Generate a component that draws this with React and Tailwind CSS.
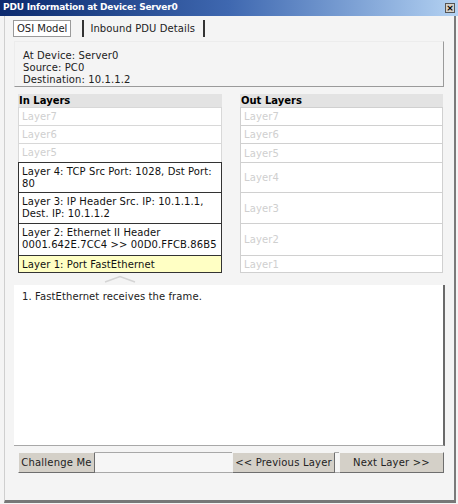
import React from "react";

const inRows = [
  { text: "Layer7", h: "h-[19px]", on: false },
  { text: "Layer6", h: "h-[19px]", on: false },
  { text: "Layer5", h: "h-[20px]", on: false },
  { text: "Layer 4: TCP Src Port: 1028, Dst Port: 80", h: "h-[31px]", on: true },
  { text: "Layer 3: IP Header Src. IP: 10.1.1.1, Dest. IP: 10.1.1.2", h: "h-[32px]", on: true },
  { text: "Layer 2: Ethernet II Header 0001.642E.7CC4 >> 00D0.FFCB.86B5", h: "h-[33px]", on: true },
  { text: "Layer 1: Port FastEthernet", h: "h-[18px]", on: true, current: true },
];

const outRows = ["Layer7", "Layer6", "Layer5", "Layer4", "Layer3", "Layer2", "Layer1"];

function LayerColumn({ title, children }) {
  return (
    <div className="flex flex-col">
      <div className="h-[14px] bg-[#e3e3e3] pl-[1px] text-[10px] font-bold leading-[14px] text-black">
        {title}
      </div>
      {children}
    </div>
  );
}

function Button({ children, className = "" }) {
  return (
    <button
      className={`h-[21px] bg-[#d4d0c8] border border-t-[#f4f4f4] border-l-[#f4f4f4] border-b-[#6e6e6e] border-r-[#6e6e6e] text-[10px] tracking-[0.2px] text-[#222] leading-none ${className}`}
    >
      {children}
    </button>
  );
}

export default function App() {
  return (
    <div className="w-[458px] h-[504px] bg-[#f4f4f4] flex flex-col font-['DejaVu_Sans',sans-serif] overflow-hidden">
      {/* title bar */}
      <div className="h-[16px] flex items-center justify-between bg-gradient-to-r from-[#0c2a6e] via-[#3f68b0] to-[#b4d2f2] pl-[3px] pr-[3px]">
        <span className="text-white font-bold text-[9px] tracking-[-0.2px]">
          PDU Information at Device: Server0
        </span>
        <span className="w-[10px] h-[10px] bg-[#d4d0c8] border border-[#555] flex items-center justify-center text-[9px] leading-none font-bold text-black">
          ×
        </span>
      </div>

      <div className="flex-1 flex flex-col ml-[4px] mr-[2px] border-l border-[#cfcfcf] border-r-2 border-r-[#7a7a7a] border-b-[3px] border-b-[#777] mb-[1px]">
        {/* tabs */}
        <div className="flex items-center h-[18px] mt-[3px] pl-[8px] text-[10px] text-[#222]">
          <div className="h-[17px] px-[3px] border border-[#9a9a9a] bg-white flex items-center">OSI Model</div>
          <div className="w-[2px] h-[17px] bg-[#333] ml-[11px]" />
          <div className="pl-[6px] pr-[8px] tracking-[0.1px]">Inbound PDU Details</div>
          <div className="w-[2px] h-[17px] bg-[#333]" />
        </div>

        {/* device info */}
        <div className="mt-[4px] ml-[9px] w-[430px] h-[46px] border border-[#ececec] border-r-[#9a9a9a] border-b-[#9a9a9a] pl-[8px] pt-[8px] text-[10px] leading-[12px] tracking-[0.1px] text-[#222]">
          <div>At Device: Server0</div>
          <div>Source: PC0</div>
          <div>Destination: 10.1.1.2</div>
        </div>

        {/* layers */}
        <div className="flex gap-[18px] mt-[7px] ml-[13px]">
          <div className="w-[204px]">
            <LayerColumn title="In Layers">
              {inRows.map((r) => (
                <div
                  key={r.text}
                  className={`${r.h} -mt-px first:mt-0 border px-[3px] text-[10px] tracking-[0.1px] leading-[12px] flex ${
                    r.on
                      ? "border-[#333] text-[#111] relative z-10 items-start pt-[3px]"
                      : "border-[#d8d8d8] text-[#cfcfcf] items-center"
                  } ${r.current ? "bg-[#ffffc4]" : "bg-white"}`}
                >
                  {r.text}
                </div>
              ))}
            </LayerColumn>
            <div className="flex justify-center h-[12px] pt-[2px]">
              <svg width="34" height="8" viewBox="0 0 34 8">
                <path d="M2 7 L17 1.5 L32 7" fill="none" stroke="#d4d4d4" strokeWidth="1.5" />
              </svg>
            </div>
          </div>
          <div className="w-[203px]">
            <LayerColumn title="Out Layers">
              {outRows.map((t, i) => (
                <div
                  key={t}
                  className={`${inRows[i].h} -mt-px first:mt-0 border border-[#d0d0d0] bg-white px-[3px] text-[10px] tracking-[0.1px] text-[#cfcfcf] flex items-center`}
                >
                  {t}
                </div>
              ))}
            </LayerColumn>
          </div>
        </div>

        {/* description */}
        <div className="ml-[9px] w-[431px] h-[161px] bg-white border-r-2 border-r-[#6a6a6a] border-b border-b-[#a8a8a8] pl-[8px] pt-[4px] text-[10px] tracking-[0.1px] text-[#222]">
          1. FastEthernet receives the frame.
        </div>

        {/* buttons */}
        <div className="mt-[6px] ml-[13px] w-[426px] h-[21px] flex justify-between border-t border-b border-[#a8a8a8] bg-[#f6f6f6]">
          <Button className="w-[77px] -mt-px">Challenge Me</Button>
          <div className="flex gap-[4px] -mt-px">
            <Button className="w-[103px]">&lt;&lt; Previous Layer</Button>
            <Button className="w-[105px]">Next Layer &gt;&gt;</Button>
          </div>
        </div>
      </div>
    </div>
  );
}
